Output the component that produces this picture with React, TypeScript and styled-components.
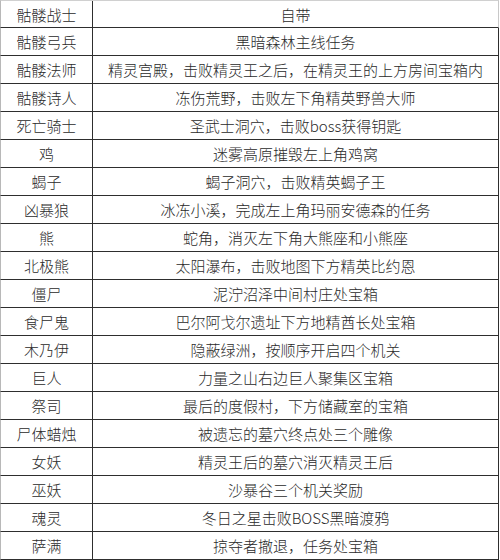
import React from "react";
import styled, { createGlobalStyle } from "styled-components";

const Global = createGlobalStyle`
  html, body { margin: 0; padding: 0; background: #ffffff; }
  body { font-family: "Noto Sans CJK SC", "Noto Sans", sans-serif; }
`;

const Table = styled.div`
  width: 499px;
  display: flex;
  flex-direction: column;
  background: #ffffff;
`;

const Row = styled.div<{ $first?: boolean }>`
  display: grid;
  grid-template-columns: 92px 1fr;
  height: 28px;
  box-sizing: border-box;
  border-left: 1px solid #b8b8b8;
  border-right: 1px solid ${(p) => (p.$first ? "#c8c8c8" : "#2e2e2e")};
  border-top: ${(p) => (p.$first ? "1px solid #d0d0d0" : "none")};
  border-bottom: 1px solid #2e2e2e;
`;

const Cell = styled.div<{ $divider?: boolean }>`
  display: flex;
  align-items: center;
  justify-content: center;
  font-size: 15px;
  font-weight: 300;
  line-height: 1;
  color: #2a2a2a;
  white-space: nowrap;
  box-sizing: border-box;
  border-right: ${(p) => (p.$divider ? "1px solid #2e2e2e" : "none")};
`;

const rows: [string, string][] = [
  ["骷髅战士", "自带"],
  ["骷髅弓兵", "黑暗森林主线任务"],
  ["骷髅法师", "精灵宫殿，击败精灵王之后，在精灵王的上方房间宝箱内"],
  ["骷髅诗人", "冻伤荒野，击败左下角精英野兽大师"],
  ["死亡骑士", "圣武士洞穴，击败boss获得钥匙"],
  ["鸡", "迷雾高原摧毁左上角鸡窝"],
  ["蝎子", "蝎子洞穴，击败精英蝎子王"],
  ["凶暴狼", "冰冻小溪，完成左上角玛丽安德森的任务"],
  ["熊", "蛇角，消灭左下角大熊座和小熊座"],
  ["北极熊", "太阳瀑布，击败地图下方精英比约恩"],
  ["僵尸", "泥泞沼泽中间村庄处宝箱"],
  ["食尸鬼", "巴尔阿戈尔遗址下方地精酋长处宝箱"],
  ["木乃伊", "隐蔽绿洲，按顺序开启四个机关"],
  ["巨人", "力量之山右边巨人聚集区宝箱"],
  ["祭司", "最后的度假村，下方储藏室的宝箱"],
  ["尸体蜡烛", "被遗忘的墓穴终点处三个雕像"],
  ["女妖", "精灵王后的墓穴消灭精灵王后"],
  ["巫妖", "沙暴谷三个机关奖励"],
  ["魂灵", "冬日之星击败BOSS黑暗渡鸦"],
  ["萨满", "掠夺者撤退，任务处宝箱"],
];

export default function App() {
  return (
    <>
      <Global />
      <Table>
        {rows.map(([name, source], i) => (
          <Row key={name} $first={i === 0}>
            <Cell $divider>{name}</Cell>
            <Cell>{source}</Cell>
          </Row>
        ))}
      </Table>
    </>
  );
}
